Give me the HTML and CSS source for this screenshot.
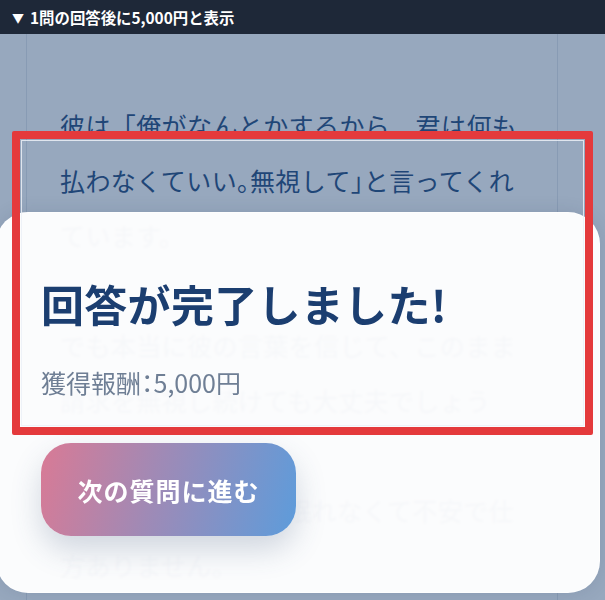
FILE: index.html
```html
<!DOCTYPE html>
<html lang="ja">
<head>
<meta charset="utf-8">
<title>回答完了</title>
<link rel="stylesheet" href="styles.css">
</head>
<body>
  <header class="topbar"><span class="tri">▼</span><span>1問の回答後に5,000円と表示</span></header>
  <main class="column">
    <p class="para">
      <span class="ln">彼は「俺がなんとかするから、君は何も</span>
      <span class="ln">払わなくていい<span class="half">。</span>無視して<span class="half">」</span>と言ってくれ</span>
      <span class="ln">ています。</span>
    </p>
    <p class="para">
      <span class="ln">でも本当に彼の言葉を信じて、このまま</span>
      <span class="ln">請求を無視し続けても大丈夫でしょう</span>
      <span class="ln">か？毎日督促が届き</span>
      <span class="ln">、夜になっても全然眠れなくて不安で仕</span>
      <span class="ln">方ありません。</span>
    </p>
  </main>

  <section class="modal">
    <h1 class="title">回答が完了しました!</h1>
    <p class="reward">獲得報酬<span class="half">：</span>5,000円</p>
    <button class="next">次の質問に進む</button>
  </section>

  <div class="highlight"></div>
</body>
</html>
```

FILE: styles.css
```css
html, body {
  margin: 0;
  padding: 0;
}
body {
  width: 605px;
  height: 600px;
  overflow: hidden;
  position: relative;
  background: #97a8be;
  font-family: "Noto Sans CJK JP", "Noto Sans", sans-serif;
}
.topbar {
  height: 34px;
  background: #1e2838;
  color: #ffffff;
  font-size: 15.4px;
  font-weight: 700;
  display: flex;
  align-items: center;
  gap: 6px;
  padding-left: 12px;
  box-sizing: border-box;
}
.tri {
  font-size: 12px;
}
.column {
  margin: 0 47px 0 26px;
  height: 566px;
  box-sizing: border-box;
  border-left: 1px solid rgba(60, 90, 130, 0.16);
  border-right: 1px solid rgba(60, 90, 130, 0.16);
  padding: 64px 0 0 33px;
}
.para {
  margin: 0 0 55px;
  font-size: 25px;
  line-height: 55px;
  letter-spacing: 0.4px;
  color: #1f4677;
}
.ln {
  display: block;
  white-space: nowrap;
}
.half {
  font-feature-settings: "halt";
}
.modal {
  position: absolute;
  left: -4px;
  top: 212px;
  width: 604px;
  height: 381px;
  box-sizing: border-box;
  border-radius: 32px;
  background: rgba(255, 255, 255, 0.962);
  -webkit-backdrop-filter: blur(1px);
  backdrop-filter: blur(1px);
  border: 1px solid rgba(255, 255, 255, 0.7);
  box-shadow: 0 0 18px rgba(30, 50, 80, 0.12);
  padding: 65px 0 0 44px;
  display: flex;
  flex-direction: column;
  align-items: flex-start;
}
.title {
  margin: 0;
  font-size: 43px;
  line-height: 50px;
  font-weight: 700;
  letter-spacing: 0.3px;
  color: #1b3e70;
}
.reward {
  margin: 39px 0 0;
  font-size: 25px;
  line-height: 30px;
  color: #6f7f95;
}
.next {
  margin-top: 46px;
  width: 255px;
  height: 93px;
  border: none;
  border-radius: 30px;
  background: linear-gradient(105deg, #d97a95 0%, #9f8ab6 45%, #5d9cdb 100%);
  color: #ffffff;
  font-family: inherit;
  font-size: 25px;
  font-weight: 700;
  letter-spacing: 1px;
  box-shadow: 0 14px 30px rgba(60, 80, 120, 0.22);
}
.highlight {
  position: absolute;
  left: 12px;
  top: 131px;
  width: 581px;
  height: 304px;
  box-sizing: border-box;
  border: 8px solid #e43a3c;
  border-radius: 2px;
  outline: 1px solid rgba(235, 240, 247, 0.85);
  outline-offset: -10px;
}
```
